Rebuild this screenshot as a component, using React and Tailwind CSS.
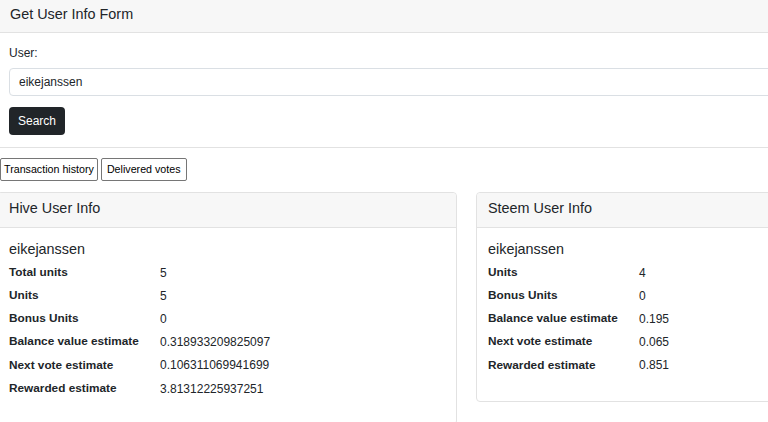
import React from 'react';

const hiveRows = [
  ['Total units', '5'],
  ['Units', '5'],
  ['Bonus Units', '0'],
  ['Balance value estimate', '0.318933209825097'],
  ['Next vote estimate', '0.106311069941699'],
  ['Rewarded estimate', '3.81312225937251'],
];

const steemRows = [
  ['Units', '4'],
  ['Bonus Units', '0'],
  ['Balance value estimate', '0.195'],
  ['Next vote estimate', '0.065'],
  ['Rewarded estimate', '0.851'],
];

const InfoCard = ({ title, user, rows }) => (
  <div className="w-[460px] shrink-0 border border-[#e2e2e2] rounded-[4px] bg-white">
    <div className="h-[35px] bg-[#f7f7f7] border-b border-[#e2e2e2] px-[11px] pt-[3px] rounded-t-[4px]">
      <span className="text-[14.4px] leading-[17px] text-[#212529]">{title}</span>
    </div>
    <div className="px-[11px] pt-[13px] pb-[24px]">
      <div className="text-[14.4px] leading-[17px] text-[#212529] mb-[3px]">{user}</div>
      {rows.map(([label, value]) => (
        <div key={label} className="flex h-[23.2px] items-center text-[12px] text-[#212529]">
          <div className="w-[151px] font-bold text-[11.8px]">{label}</div>
          <div>{value}</div>
        </div>
      ))}
    </div>
  </div>
);

const App = () => {
  return (
    <div
      className="w-[768px] h-[422px] overflow-hidden bg-white text-[#212529]"
      style={{ fontFamily: '"Liberation Sans", Arial, sans-serif' }}
    >
      <div className="w-[1000px] -ml-[3px]">
        {/* Search form card */}
        <div className="border-x border-b border-[#e2e2e2] bg-white">
          <div className="h-[33px] bg-[#f7f7f7] border-b border-[#e2e2e2] px-[12px] pt-[2px]">
            <span className="text-[14.4px] leading-[17px]">Get User Info Form</span>
          </div>
          <div className="px-[11px] pt-[11px] pb-[12px]">
            <div className="text-[12px] leading-[18px]">User:</div>
            <div className="mt-[6px] h-[28px] border border-[#dadfe4] rounded-[4px] flex items-center px-[9px] text-[12px]">
              eikejanssen
            </div>
            <button className="mt-[11px] h-[28px] w-[56px] bg-[#212529] text-white text-[12px] rounded-[4px]">
              Search
            </button>
          </div>
        </div>

        {/* Tab buttons */}
        <div className="flex gap-[3px] pt-[10px] pl-[3px]">
          <button className="h-[23px] px-[3px] border border-[#767676] rounded-[2px] bg-white text-[10.7px] text-black">
            Transaction history
          </button>
          <button className="h-[23px] px-[5px] border border-[#767676] rounded-[2px] bg-white text-[10.7px] text-black">
            Delivered votes
          </button>
        </div>

        {/* User info cards */}
        <div className="flex items-start gap-[19px] mt-[11px]">
          <InfoCard title="Hive User Info" user="eikejanssen" rows={hiveRows} />
          <InfoCard title="Steem User Info" user="eikejanssen" rows={steemRows} />
        </div>
      </div>
    </div>
  );
};

export default App;
